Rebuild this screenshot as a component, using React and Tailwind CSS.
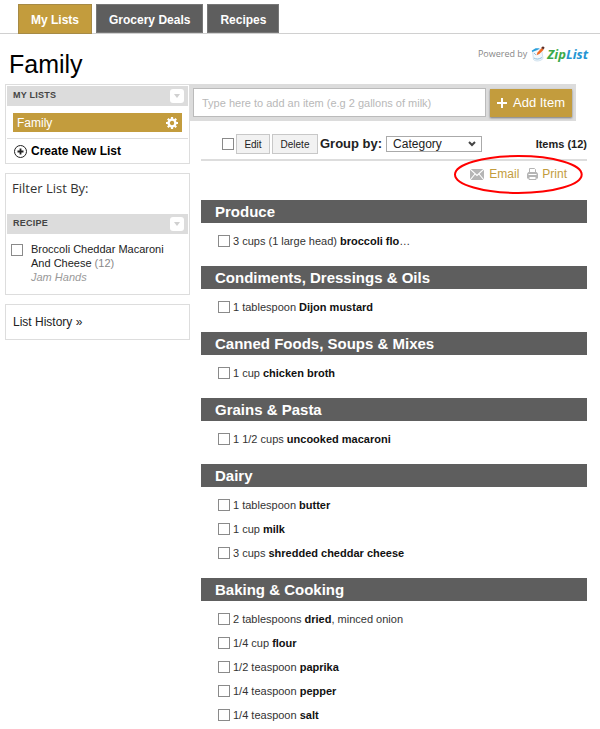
import { useState } from 'react';

const tabs = ['My Lists', 'Grocery Deals', 'Recipes'];

const sections = [
    { name: 'Produce', items: [{ amount: '3 cups (1 large head) ', food: 'broccoli flo', note: '…' }] },
    { name: 'Condiments, Dressings & Oils', items: [{ amount: '1 tablespoon ', food: 'Dijon mustard' }] },
    { name: 'Canned Foods, Soups & Mixes', items: [{ amount: '1 cup ', food: 'chicken broth' }] },
    { name: 'Grains & Pasta', items: [{ amount: '1 1/2 cups ', food: 'uncooked macaroni' }] },
    {
        name: 'Dairy',
        items: [
            { amount: '1 tablespoon ', food: 'butter' },
            { amount: '1 cup ', food: 'milk' },
            { amount: '3 cups ', food: 'shredded cheddar cheese' },
        ],
    },
    {
        name: 'Baking & Cooking',
        items: [
            { amount: '2 tablespoons ', food: 'dried', note: ', minced onion' },
            { amount: '1/4 cup ', food: 'flour' },
            { amount: '1/2 teaspoon ', food: 'paprika' },
            { amount: '1/4 teaspoon ', food: 'pepper' },
            { amount: '1/4 teaspoon ', food: 'salt' },
        ],
    },
];

function Checkbox({ className = '', ...props }) {
    return (
        <input
            type="checkbox"
            className={`size-3 shrink-0 appearance-none border border-[#8a8a8a] bg-white checked:bg-[#c39c3d] ${className}`}
            {...props}
        />
    );
}

function PanelHeader({ title }) {
    return (
        <div className="mx-px flex h-5 items-center justify-between bg-[#dcdcdc] pr-1 pl-1.5">
            <h2 className="text-[9px] font-bold tracking-wide text-[#444]">{title}</h2>
            <button type="button" aria-label={`Toggle ${title}`} className="flex size-3.5 items-center justify-center rounded-[3px] bg-white">
                <svg width="6" height="4" viewBox="0 0 6 4" fill="#d0d0d0"><path d="M0 0h6L3 4z" /></svg>
            </button>
        </div>
    );
}

function GearIcon() {
    return (
        <svg width="12" height="12" viewBox="0 0 12 12">
            <circle cx="6" cy="6" r="3.4" fill="none" stroke="#fff" strokeWidth="2.4" />
            <path d="M6 0v2M6 10v2M0 6h2M10 6h2M1.8 1.8l1.4 1.4M8.8 8.8l1.4 1.4M1.8 10.2l1.4-1.4M8.8 3.2l1.4-1.4" stroke="#fff" strokeWidth="2.2" />
        </svg>
    );
}

function MailIcon() {
    return (
        <svg width="14" height="11" viewBox="0 0 14 11">
            <path fill="#b5b5b5" d="M0 0h14v11H0z" />
            <path fill="none" stroke="#fff" strokeWidth="1.1" d="M0 0l7 6.5L14 0M0 11l5-6M14 11L9 5" />
        </svg>
    );
}

function PrinterIcon() {
    return (
        <svg width="11" height="12" viewBox="0 0 11 12">
            <path fill="#fff" stroke="#b5b5b5" d="M2.5 5V.5h5l1 1V5" />
            <path fill="#b5b5b5" d="M1.5 4h8L11 5.5V10.5H0v-5z" />
            <path fill="#fff" d="M1.5 6h8v1h-8z" />
            <path fill="#fff" stroke="#b5b5b5" d="M2 8.5h7v3H2z" />
        </svg>
    );
}

function LogoMark() {
    return (
        <svg width="14" height="16" viewBox="0 0 14 16">
            <path d="M1.5 4.5l9-1.5 1.5 9.5c-2 2.5-7 3.5-9.5 1z" fill="#f3f8fc" stroke="#c4dbea" strokeWidth=".8" />
            <path d="M.6 4.8l4-2.6 4.2.1-2.5 1.8-5 1.8z" fill="#2a9fdc" />
            <path d="M3 7l2 2M3 12c2 1.5 5 1.5 8-.5" stroke="#8fc0de" fill="none" />
            <path d="M5.5 9.2l1-2.8L10.7 2l2 1.8-4.4 4.3z" fill="#f26a21" />
            <path d="M10.2 1.8L12 .2l1.7 1.6-1.5 1.8z" fill="#5b2b23" />
        </svg>
    );
}

function ListItem({ item }) {
    return (
        <li>
            <label className="flex h-6 items-center gap-[3px] text-[11px] text-[#333]">
                <Checkbox />
                <span>{item.amount}<b className="text-[#111]">{item.food}</b>{item.note}</span>
            </label>
        </li>
    );
}

export default function App() {
    const [activeTab, setActiveTab] = useState('My Lists');
    const [newItem, setNewItem] = useState('');

    return (
        <div className="bg-white pt-1 font-['Liberation_Sans',Arial,sans-serif] text-[#222]">
            <nav className="flex h-[30px] gap-1 border-b border-[#d0d0d0] pl-[18px]">
                {tabs.map(tab => (
                    <button
                        key={tab}
                        type="button"
                        onClick={() => setActiveTab(tab)}
                        className={`border px-3 pt-0.5 text-xs font-bold text-white ${tab === activeTab ? '-mb-px border-[#a68a45] bg-[#c39c3d]' : 'border-[#777] bg-[#5e5e5e]'}`}
                    >
                        {tab}
                    </button>
                ))}
            </nav>

            <header className="flex items-start justify-between pt-3 pr-3 pb-1 pl-[9px]">
                <h1 className="pt-0.5 text-[25px] leading-8 text-black">Family</h1>
                <a href="#" className="flex items-center font-['Open_Sans',sans-serif]">
                    <span className="mr-1 text-[9px] text-[#888]">Powered by</span>
                    <LogoMark />
                    <span className="ml-0.5 text-[13px] leading-4 font-bold text-[#3aaa4a] italic">Zip<span className="text-[#2495d3]">List</span></span>
                </a>
            </header>

            <div className="flex items-start pl-[5px]">
                <aside className="w-[185px] shrink-0">
                    <section className="border border-[#ddd] pt-px">
                        <PanelHeader title="MY LISTS" />
                        <div className="px-[7px] pt-[7px] pb-1.5">
                            <div className="flex h-[19px] items-center justify-between bg-[#c39c3d] px-1">
                                <a href="#" className="text-xs text-white">Family</a>
                                <button type="button" aria-label="List settings"><GearIcon /></button>
                            </div>
                        </div>
                        <div className="mx-px border-t border-[#ddd]">
                            <button type="button" className="flex h-6 items-center gap-1 pl-[7px] text-xs font-bold text-black">
                                <svg width="13" height="13" viewBox="0 0 13 13" fill="none" stroke="#222">
                                    <circle cx="6.5" cy="6.5" r="6" />
                                    <path d="M6.5 3.5v6M3.5 6.5h6" strokeWidth="1.8" />
                                </svg>
                                Create New List
                            </button>
                        </div>
                    </section>

                    <section className="mt-[9px] border border-[#ddd] pb-2.5">
                        <h2 className="px-1.5 pt-1 pb-4 font-['Open_Sans',sans-serif] text-[13px] leading-5 text-[#333]">Filter List By:</h2>
                        <PanelHeader title="RECIPE" />
                        <label className="flex gap-2 pt-2 pr-4 pl-[5px] text-[11px] leading-[14px] text-[#222]">
                            <Checkbox className="mt-0.5" />
                            <span>
                                Broccoli Cheddar Macaroni And Cheese <span className="text-[#888]">(12)</span>
                                <em className="block text-[#999]">Jam Hands</em>
                            </span>
                        </label>
                    </section>

                    <section className="mt-[9px] border border-[#ddd]">
                        <a href="#" className="block px-[7px] text-xs leading-[34px] text-[#222]">List History »</a>
                    </section>
                </aside>

                <main className="min-w-0 flex-1">
                    <form onSubmit={e => e.preventDefault()} className="mr-6 flex gap-1 bg-[#dcdcdc] p-1 pl-[3px]">
                        <input
                            type="text"
                            aria-label="Add an item"
                            placeholder="Type here to add an item (e.g 2 gallons of milk)"
                            value={newItem}
                            onChange={e => setNewItem(e.target.value)}
                            className="h-[29px] min-w-0 flex-1 border border-[#bbb] bg-white px-2 text-[11px] outline-none placeholder:text-[#b8b8b8]"
                        />
                        <button type="submit" className="mt-px flex h-7 w-[82px] items-center justify-center gap-1.5 bg-[#c39c3d] text-[13px] text-white shadow-[0_1px_2px_#777]">
                            <svg width="10" height="10" viewBox="0 0 10 10" stroke="#fff" strokeWidth="2"><path d="M5 0v10M0 5h10" /></svg>
                            Add Item
                        </button>
                    </form>

                    <div className="mr-[13px] ml-[11px]">
                        <div className="flex h-10 items-center border-b-2 border-[#ddd] pt-2 pl-[21px]">
                            <Checkbox aria-label="Select all" className="mr-0.5" />
                            <button type="button" className="mr-0.5 h-5 w-[34px] border border-[#c8c8c8] bg-[#f2f2f2] text-[10px]">Edit</button>
                            <button type="button" className="mr-0.5 h-5 w-[46px] border border-[#c8c8c8] bg-[#f2f2f2] text-[10px]">Delete</button>
                            <label htmlFor="group-by" className="mr-1 text-[13px] font-bold whitespace-nowrap">Group by:</label>
                            <div className="relative">
                                <select id="group-by" className="block h-4 w-24 appearance-none border border-[#aaa] bg-white pl-1.5 text-xs leading-3.5 text-[#222]">
                                    <option>Category</option>
                                    <option>Recipe</option>
                                </select>
                                <svg className="pointer-events-none absolute top-[5px] right-1.5" width="8" height="6" viewBox="0 0 8 6" fill="none" stroke="#444" strokeWidth="2"><path d="M1 1l3 3 3-3" /></svg>
                            </div>
                            <span className="ml-auto text-[11px] font-bold whitespace-nowrap">Items (12)</span>
                        </div>

                        <div className="flex h-[39px] justify-end pr-1">
                            <div className="relative flex h-[26px] items-center px-4 text-xs text-[#c39c3d]">
                                <a href="#" className="mr-2 flex items-center gap-[5px]"><MailIcon />Email</a>
                                <a href="#" className="flex items-center gap-1"><PrinterIcon />Print</a>
                                <svg className="pointer-events-none absolute -top-1.5 left-0 h-[39px] w-full overflow-visible" viewBox="0 0 128 39" preserveAspectRatio="none">
                                    <ellipse cx="64" cy="19.5" rx="63" ry="18.5" fill="none" stroke="#f00" strokeWidth="2" />
                                </svg>
                            </div>
                        </div>

                        {sections.map(section => (
                            <section key={section.name} className="pb-[13px] last:pb-0">
                                <h2 className="bg-[#5e5e5e] pl-3.5 text-[15px] leading-[23px] font-bold text-white">{section.name}</h2>
                                <ul className="pt-1.5 pl-[17px]">
                                    {section.items.map(item => <ListItem key={item.amount + item.food} item={item} />)}
                                </ul>
                            </section>
                        ))}
                    </div>
                </main>
            </div>
        </div>
    );
}
